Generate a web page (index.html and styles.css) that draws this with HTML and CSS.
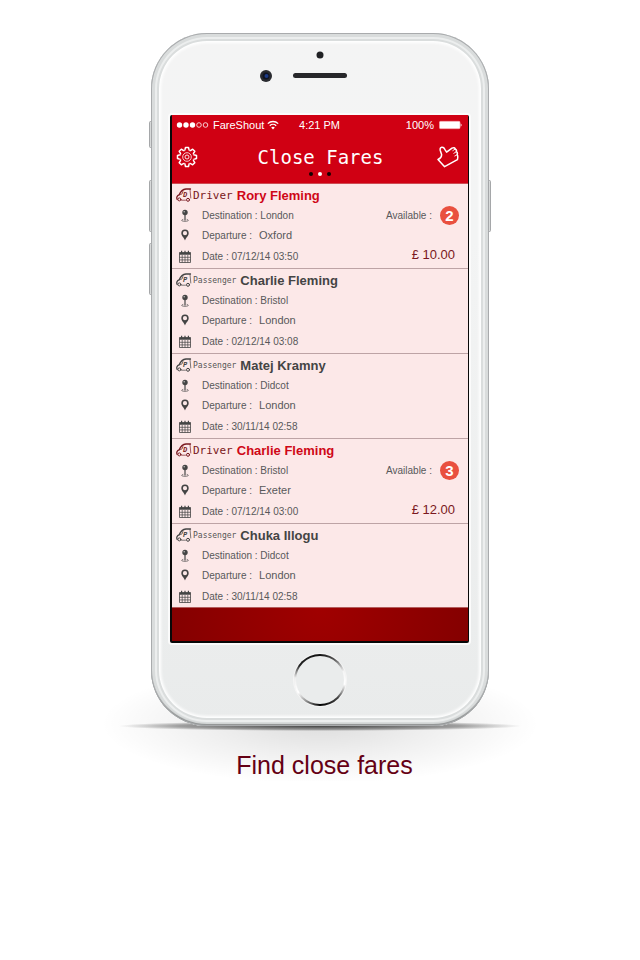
FILE: index.html
```html
<!DOCTYPE html>
<html lang="en">
<head>
<meta charset="utf-8">
<meta name="viewport" content="width=device-width, initial-scale=1">
<title>FareShout - Close Fares</title>
<link rel="stylesheet" href="styles.css">
</head>
<body>
<svg class="sprite" aria-hidden="true">
  <symbol id="car" viewBox="0 0 16 14">
    <g fill="none" stroke="currentColor" stroke-linecap="round" stroke-linejoin="round">
      <path stroke-width="1.3" d="M1.200 11.500C.2 9.500 1 7.500 3.200 6.800 4.500 3.500 6.500 1.300 10 1h4.500"/>
      <path stroke-width=".7" d="M3.200 6.800L6 6 7 3M14 1.500l.8 8.500M5.500 12.200h4"/>
      <circle cx="3.400" cy="11.400" r="1.500"/>
      <circle cx="12" cy="11.800" r="1.500"/>
    </g>
  </symbol>
  <symbol id="pin" viewBox="0 0 12 14">
    <circle cx="6" cy="3.500" r="2.700" fill="currentColor"/>
    <circle cx="5.200" cy="2.700" r=".8" fill="#bbb"/>
    <path d="M6 6v5.500" stroke="currentColor" stroke-width="1.200"/>
    <path d="M4.300 10.300c-3 .8-1.500 2 1.700 2s4.700-1.200 1.700-2" fill="none" stroke="currentColor" stroke-width=".7"/>
  </symbol>
  <symbol id="marker" viewBox="0 0 12 14">
    <path fill="currentColor" fill-rule="evenodd" d="M6 1.500a3.700 3.700 0 0 0-3.700 3.800C2.300 8 5 9.500 6 12.500 7 9.500 9.700 8 9.700 5.300A3.700 3.700 0 0 0 6 1.500zm0 1.600a2.100 2.100 0 1 1 0 4.200 2.100 2.100 0 0 1 0-4.200z"/>
  </symbol>
  <symbol id="calendar" viewBox="0 0 12 14">
    <path fill="none" stroke="currentColor" stroke-width=".8" d="M.5 2.500h11v10H.5z"/>
    <path fill="currentColor" d="M.5 2.500h11v2.300H.5zM2 .8h1.200v2H2zM5.400.8h1.200v2H5.400zM8.800.8H10v2H8.800z"/>
    <path stroke="currentColor" stroke-width=".7" d="M.5 7.300h11M.5 9.900h11M3.200 5v7.500M6 5v7.500M8.800 5v7.500"/>
  </symbol>
</svg>

<main class="page">
  <div class="phone">
    <i class="side mute"></i><i class="side up"></i><i class="side down"></i><i class="side power"></i>
    <div class="top">
      <svg viewBox="0 0 100 40" width="100" height="40" aria-hidden="true">
        <circle cx="64" cy="8" r="3.500" fill="#202124"/>
        <rect x="37" y="26" width="54" height="5" rx="2.500" fill="#27272a"/>
        <circle cx="10" cy="29" r="6" fill="#2a2b30"/>
        <circle cx="10" cy="29" r="3.500" fill="#111522"/>
        <circle cx="10.500" cy="29" r="2" fill="#1d3b86"/>
      </svg>
    </div>

    <section class="screen">
      <header class="bar">
        <div class="status">
          <span class="carrier">
            <svg viewBox="0 0 34 8" width="34" height="8" aria-label="Signal 3 of 5" role="img">
              <g fill="#fff"><circle cx="3.500" cy="4" r="2.700"/><circle cx="10" cy="4" r="2.700"/><circle cx="16.500" cy="4" r="2.700"/></g>
              <g fill="none" stroke="#fff" stroke-width=".8"><circle cx="23" cy="4" r="2.300"/><circle cx="29.500" cy="4" r="2.300"/></g>
            </svg>
            FareShout
            <svg viewBox="0 0 12 10" width="12" height="10" aria-hidden="true">
              <path d="M.8 3.600a7.500 7.500 0 0 1 10.400 0M2.800 5.700a4.600 4.600 0 0 1 6.400 0" fill="none" stroke="#fff" stroke-width="1.300"/>
              <path d="M6 9.500L4.200 7.500a2.600 2.600 0 0 1 3.600 0z" fill="#fff"/>
            </svg>
          </span>
          <span class="time">4:21 PM</span>
          <span class="power-level">100%
            <svg viewBox="0 0 24 10" width="24" height="10" aria-hidden="true">
              <rect x=".5" y="1.300" width="20.500" height="7.400" rx="1" fill="#fff" stroke="#f6a5ad" stroke-width=".6"/>
              <path d="M21.600 3.200q2 1.800 0 3.600z" fill="#fff"/>
            </svg>
          </span>
        </div>
        <div class="nav">
          <button type="button" aria-label="Settings">
            <svg viewBox="-11 -11 22 22" width="22" height="22" fill="none" stroke="#fff" stroke-width="1.500" stroke-linejoin="round">
              <defs><path id="tooth" d="M-2.700-6.600Q-2-6.700-1.900-7.800L-1.500-9.500H1.500L1.900-7.800Q2-6.700 2.700-6.600"/></defs>
              <use href="#tooth"/><use href="#tooth" transform="rotate(45)"/><use href="#tooth" transform="rotate(90)"/><use href="#tooth" transform="rotate(135)"/>
              <use href="#tooth" transform="rotate(180)"/><use href="#tooth" transform="rotate(225)"/><use href="#tooth" transform="rotate(270)"/><use href="#tooth" transform="rotate(315)"/>
              <circle r="4.300" stroke-width=".8"/><circle r="2" stroke-width=".9"/>
            </svg>
          </button>
          <h1>Close Fares</h1>
          <button type="button" aria-label="Like">
            <svg viewBox="0 0 22 22" width="22" height="22" fill="none" stroke="#fff" stroke-width="1.500" stroke-linejoin="round" stroke-linecap="round">
              <path d="M1 13.500Q4.800 11.800 4.600 8.600L3.200 4.200Q2.800 1.600 4.800 1.300 6.800 1 7.800 3.300L9.600 6.200 15 2.200Q17.600 .8 18.200 3 20 3.700 19.300 5.600 21 6.600 20.100 8.600 21.300 10 20.400 13.700L7.600 20.700Z"/>
              <path stroke-width=".9" d="M18.200 3L15.800 4.600M19.300 5.800L16.800 7.300M20.100 8.800L17.800 10"/>
            </svg>
          </button>
        </div>
        <div class="dots" aria-hidden="true"><i></i><i class="on"></i><i></i></div>
      </header>

      <ul class="fares">
        <li class="fare driver">
          <h2><svg class="car" role="img" aria-label="Car"><use href="#car"/><text x="7" y="9">D</text></svg><small>Driver</small><span>Rory Fleming</span></h2>
          <p class="dest"><svg><use href="#pin"/></svg><span>Destination : London</span><span class="avail">Available :</span><b class="badge">2</b></p>
          <p class="dep"><svg><use href="#marker"/></svg><span class="label">Departure :</span><span class="place">Oxford</span></p>
          <p class="date"><svg><use href="#calendar"/></svg><span>Date : 07/12/14 03:50</span><span class="price">£ 10.00</span></p>
        </li>
        <li class="fare">
          <h2><svg class="car" role="img" aria-label="Car"><use href="#car"/><text x="7" y="9">P</text></svg><small>Passenger</small><span>Charlie Fleming</span></h2>
          <p class="dest"><svg><use href="#pin"/></svg><span>Destination : Bristol</span></p>
          <p class="dep"><svg><use href="#marker"/></svg><span class="label">Departure :</span><span class="place">London</span></p>
          <p class="date"><svg><use href="#calendar"/></svg><span>Date : 02/12/14 03:08</span></p>
        </li>
        <li class="fare">
          <h2><svg class="car" role="img" aria-label="Car"><use href="#car"/><text x="7" y="9">P</text></svg><small>Passenger</small><span>Matej Kramny</span></h2>
          <p class="dest"><svg><use href="#pin"/></svg><span>Destination : Didcot</span></p>
          <p class="dep"><svg><use href="#marker"/></svg><span class="label">Departure :</span><span class="place">London</span></p>
          <p class="date"><svg><use href="#calendar"/></svg><span>Date : 30/11/14 02:58</span></p>
        </li>
        <li class="fare driver">
          <h2><svg class="car" role="img" aria-label="Car"><use href="#car"/><text x="7" y="9">D</text></svg><small>Driver</small><span>Charlie Fleming</span></h2>
          <p class="dest"><svg><use href="#pin"/></svg><span>Destination : Bristol</span><span class="avail">Available :</span><b class="badge">3</b></p>
          <p class="dep"><svg><use href="#marker"/></svg><span class="label">Departure :</span><span class="place">Exeter</span></p>
          <p class="date"><svg><use href="#calendar"/></svg><span>Date : 07/12/14 03:00</span><span class="price">£ 12.00</span></p>
        </li>
        <li class="fare">
          <h2><svg class="car" role="img" aria-label="Car"><use href="#car"/><text x="7" y="9">P</text></svg><small>Passenger</small><span>Chuka Illogu</span></h2>
          <p class="dest"><svg><use href="#pin"/></svg><span>Destination : Didcot</span></p>
          <p class="dep"><svg><use href="#marker"/></svg><span class="label">Departure :</span><span class="place">London</span></p>
          <p class="date"><svg><use href="#calendar"/></svg><span>Date : 30/11/14 02:58</span></p>
        </li>
      </ul>
      <div class="foot"></div>
    </section>

    <button type="button" class="home" aria-label="Home"></button>
  </div>
  <p class="caption">Find close fares</p>
</main>
</body>
</html>
```

FILE: styles.css
```css
* { box-sizing: border-box; }

body {
  margin: 0;
  background: #fff;
  font-family: "Liberation Sans", Arial, sans-serif;
}

h1, h2, p, ul { margin: 0; padding: 0; }
button { padding: 0; border: 0; background: none; cursor: pointer; }
.sprite { position: absolute; width: 0; height: 0; }

.page {
  display: flex;
  flex-direction: column;
  align-items: center;
  padding-top: 33px;
}

.phone {
  position: relative;
  display: flex;
  flex-direction: column;
  width: 338px;
  max-width: 100%;
  padding: 0 20px 20px 19px;
  border-radius: 56px;
  background: linear-gradient(#f4f4f4, #f3f4f4 30%, #e9ebeb);
  box-shadow:
    inset 0 0 0 1px #a9abad,
    inset 0 -2px 1px #8d9090,
    inset 0 0 0 4px #d9dcdc,
    inset 0 0 0 6px #eceeee,
    inset 0 0 0 8px #dadddd,
    inset 0 0 3px 10px #fff;
}

/* Soft floor shadow under the device */
.phone::before {
  content: "";
  position: absolute;
  z-index: -1;
  left: -50px;
  right: -50px;
  bottom: -60px;
  height: 120px;
  background:
    radial-gradient(46% 5px at 50% 60px, #444 0, #6669 70%, transparent),
    radial-gradient(50% 60px at 50% 58px, #0002, #00000010 50%, transparent);
}

.side {
  position: absolute;
  left: -2px;
  width: 3px;
  height: 52px;
  border: 1px solid #a5a7a9;
  border-radius: 2px;
  background: #d8dada;
}
.mute { top: 88px; height: 27px; }
.up { top: 147px; }
.down { top: 210px; }
.power { top: 147px; right: -2px; left: auto; }

.top {
  display: flex;
  justify-content: center;
  height: 82px;
  padding: 14px 27px 0 0;
}

.screen {
  border: solid #080808;
  border-width: 0 1px 2px 2px;
  border-radius: 2px;
  box-shadow: 0 0 0 2px #fbfbfb;
}

.bar { height: 68px; background: #d00013; color: #fff; }

.status {
  display: grid;
  grid-template-columns: 1fr auto 1fr;
  align-items: center;
  height: 20px;
  padding: 0 5px 0 4px;
  font-size: 11px;
}
.carrier, .power-level { display: flex; align-items: center; gap: 3px; }
.power-level { justify-content: flex-end; gap: 5px; }

.nav {
  display: flex;
  align-items: center;
  justify-content: space-between;
  height: 36px;
  padding: 8px 9px 0 4px;
}
.nav svg { display: block; }
.nav h1 {
  padding-left: 6px;
  font: 19px/24px "DejaVu Sans Mono", monospace;
}

.dots { display: flex; justify-content: center; gap: 5px; padding-top: 1px; }
.dots i { width: 4px; height: 4px; border-radius: 50%; background: #160000; }
.dots .on { background: #fff; }

.fares { list-style: none; background: #fce8e8; color: #58585a; }

.fare {
  height: 85px;
  padding: 0 9px 0 4px;
  border-top: 1px solid #bda3a5;
  font-size: 10px;
}
.fare:first-child { border-color: #cf4a52; }
.fare:last-child { height: 84px; }

.fare h2 {
  display: flex;
  align-items: center;
  height: 22px;
  color: #444;
  font-size: 13px;
}
.fare small {
  margin: 0 4px 0 1px;
  font: 8px "DejaVu Sans Mono", monospace;
  color: #555;
}
.fare .car { width: 16px; height: 14px; color: #444; }
.car text { font: italic bold 7px "Liberation Mono", monospace; fill: currentColor; }

.driver h2 { color: #cf0716; }
.driver small { font-size: 11px; color: #7a1820; }
.driver .car { color: #7a1820; }

.fare p { display: flex; align-items: center; }
.fare p svg { flex: none; width: 12px; height: 14px; margin: 0 11px 0 3px; color: #444; }
.dest { height: 19px; }
.dep { height: 20px; }
.date { height: 23px; }
.place { margin-left: 7px; font-size: 11px; }
.avail { margin-left: auto; }
.badge {
  width: 19px;
  height: 19px;
  margin-left: 8px;
  border-radius: 50%;
  background: #e9503f;
  color: #fff;
  font-size: 15px;
  line-height: 19px;
  text-align: center;
}
.price { margin: 0 4px 4px auto; color: #7a1820; font-size: 13px; }

.foot {
  height: 34px;
  border-top: 1px solid #b35c5c;
  background: radial-gradient(circle at 50% 0, #a00000, #840000);
}

.home {
  align-self: center;
  width: 52px;
  height: 52px;
  margin-top: 11px;
  border: 2px solid transparent;
  border-radius: 50%;
  background:
    linear-gradient(#eaecec, #eaecec) padding-box,
    conic-gradient(#111, #555 35deg, #f5f5f5 70deg, #fff 100deg, #444 135deg, #000 180deg, #999 215deg, #fff 240deg, #eee 275deg, #222 305deg, #111) border-box;
  box-shadow: 0 0 0 1px #f5f5f5;
}

.caption {
  margin-top: 23px;
  padding-left: 9px;
  color: #650014;
  font-size: 25px;
  line-height: 32px;
}
```
